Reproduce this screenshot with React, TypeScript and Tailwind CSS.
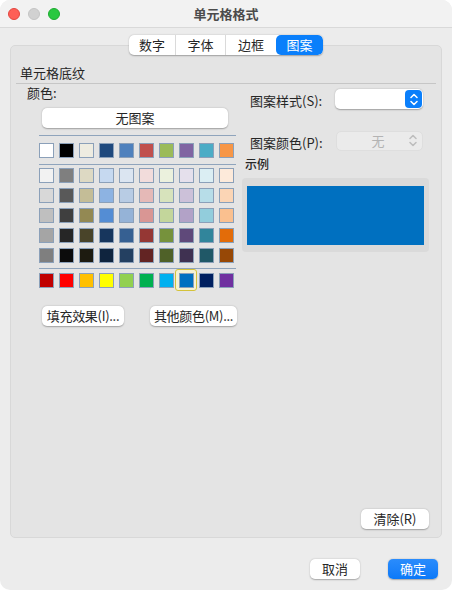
import React from 'react';

const FIRST_ROW = ['#FFFFFF', '#000000', '#EEECE1', '#1F497D', '#4F81BD', '#C0504D', '#9BBB59', '#8064A2', '#4BACC6', '#F79646'];

const THEME_ROWS = [
  ['#F2F2F2', '#7F7F7F', '#DDD9C3', '#C6D9F0', '#DBE5F1', '#F2DCDB', '#EBF1DD', '#E5E0EC', '#DBEEF3', '#FDEADA'],
  ['#D8D8D8', '#595959', '#C4BD97', '#8DB3E2', '#B8CCE4', '#E5B9B7', '#D7E3BC', '#CCC1D9', '#B7DDE8', '#FBD5B5'],
  ['#BFBFBF', '#3F3F3F', '#938953', '#548DD4', '#95B3D7', '#D99694', '#C3D69B', '#B2A2C7', '#92CDDC', '#FAC08F'],
  ['#A5A5A5', '#262626', '#494429', '#17365D', '#366092', '#953734', '#76923C', '#5F497A', '#31859B', '#E36C09'],
  ['#7F7F7F', '#0C0C0C', '#1D1B10', '#0F243E', '#244061', '#632423', '#4F6128', '#3F3151', '#205867', '#974806'],
];

const STANDARD_ROW = ['#C00000', '#FF0000', '#FFC000', '#FFFF00', '#92D050', '#00B050', '#00B0F0', '#0070C0', '#002060', '#7030A0'];

const TABS = ['数字', '字体', '边框', '图案'];

function Swatch({ color, selected }: { color: string; selected?: boolean }) {
  return (
    <div className="relative w-[15px] h-[15px] shrink-0">
      {selected && (
        <span className="absolute -left-[4px] -top-[4px] w-[22px] h-[22px] rounded-[3px] border border-[#d4c23a] bg-[#f5f1d3]" />
      )}
      <div className="relative w-[15px] h-[15px] border border-[#8ba0b9]" style={{ backgroundColor: color }} />
    </div>
  );
}

function SwatchRow({ colors, selectedIndex }: { colors: string[]; selectedIndex?: number }) {
  return (
    <div className="flex gap-[5px]">
      {colors.map((c, i) => (
        <Swatch key={i} color={c} selected={i === selectedIndex} />
      ))}
    </div>
  );
}

function Button({ children, className = '' }: { children: React.ReactNode; className?: string }) {
  return (
    <div
      className={
        'h-[20px] shrink-0 flex items-center justify-center whitespace-nowrap rounded-[5px] bg-white text-[13px] text-[#262626] shadow-[0_0.5px_1.5px_rgba(0,0,0,0.3)] ' +
        className
      }
    >
      {children}
    </div>
  );
}

function Chevrons({ color }: { color: string }) {
  return (
    <svg width="8" height="13" viewBox="0 0 8 13" fill="none" stroke={color} strokeWidth="1.5" strokeLinecap="round" strokeLinejoin="round">
      <path d="M1 4.5 L4 1.5 L7 4.5" />
      <path d="M1 8.5 L4 11.5 L7 8.5" />
    </svg>
  );
}

export default function App() {
  return (
    <div className="w-[452px] h-[590px] bg-white font-['Noto_Sans_CJK_SC',sans-serif]">
      <div className="w-full h-full rounded-[10px] overflow-hidden bg-[#ececec] flex flex-col">
        {/* title bar */}
        <div className="h-[28px] shrink-0 relative flex items-center justify-center bg-[#f2f2f2] border-b border-[#d9d9d9]">
          <div className="absolute left-[8px] top-[8px] flex gap-[8px]">
            <div className="w-[12px] h-[12px] rounded-full bg-[#fe5f57] border border-[#e2463f]" />
            <div className="w-[12px] h-[12px] rounded-full bg-[#d1d1d1] border border-[#c4c4c4]" />
            <div className="w-[12px] h-[12px] rounded-full bg-[#28c840] border border-[#1eab31]" />
          </div>
          <span className="text-[13px] font-bold text-[#4b4b4b]">单元格格式</span>
        </div>

        {/* tabs */}
        <div className="relative z-10 mt-[7px] flex justify-center">
          <div className="flex h-[20px] rounded-[5px] bg-white shadow-[0_0.5px_1.5px_rgba(0,0,0,0.3)] overflow-hidden">
            {TABS.map((t, i) => (
              <div
                key={t}
                className={
                  'flex items-center justify-center text-[13px] ' +
                  (i === 0 || i === 3 ? 'w-[47px] ' : 'w-[50px] ') +
                  (i === 3
                    ? 'bg-[#0a7ffb] text-white rounded-[5px]'
                    : 'text-[#262626] ' + (i < 2 ? 'border-r border-[#dadada]' : ''))
                }
              >
                {t}
              </div>
            ))}
          </div>
        </div>

        {/* group panel */}
        <div className="mt-[-10px] mx-[10px] h-[493px] rounded-[5px] bg-[#e4e4e4] border border-[#d8d8d8] flex flex-col">
          <div className="mt-[18px] pl-[9px] text-[13px] leading-[18px] text-[#262626]">单元格底纹</div>
          <div className="mx-[5px] h-px bg-[#c6c6c6] mt-px" />

          <div className="flex">
            {/* left column: colours */}
            <div className="w-[226px] shrink-0 pl-[16px] flex flex-col">
              <div className="text-[13px] leading-[18px] text-[#262626]">颜色:</div>
              <Button className="mt-[6px] ml-[15px] w-[186px]">无图案</Button>
              <div className="ml-[12px] w-[197px] h-px bg-[#8fa4bc] mt-[7px]" />
              <div className="ml-[12px] mt-[7px]">
                <SwatchRow colors={FIRST_ROW} />
              </div>
              <div className="ml-[12px] w-[197px] h-px bg-[#8fa4bc] mt-[6px]" />
              <div className="ml-[12px] mt-[3px] flex flex-col gap-[5px]">
                {THEME_ROWS.map((row, i) => (
                  <SwatchRow key={i} colors={row} />
                ))}
              </div>
              <div className="ml-[12px] w-[197px] h-px bg-[#8fa4bc] mt-[5px]" />
              <div className="ml-[12px] mt-[4px]">
                <SwatchRow colors={STANDARD_ROW} selectedIndex={7} />
              </div>
              <div className="mt-[18px] ml-[15px] flex gap-[26px]">
                <Button className="w-[82px] tracking-[-0.3px]">填充效果(I)...</Button>
                <Button className="w-[87px] tracking-[-0.3px]">其他颜色(M)...</Button>
              </div>
            </div>

            {/* right column: pattern */}
            <div className="ml-[5px] w-[187px] shrink-0 flex flex-col">
              <div className="mt-[4px] flex items-center justify-between pl-[8px] pr-[6px]">
                <span className="text-[13px] text-[#262626] mt-[3px]">图案样式(S):</span>
                <div className="w-[88px] h-[20px] rounded-[5px] bg-white shadow-[0_0.5px_1.5px_rgba(0,0,0,0.3)] flex justify-end items-center pr-[1px]">
                  <div className="w-[17px] h-[18px] rounded-[4px] bg-[#0a7ffb] flex items-center justify-center">
                    <Chevrons color="#ffffff" />
                  </div>
                </div>
              </div>
              <div className="mt-[19px] flex items-center justify-between pl-[8px] pr-[6px]">
                <span className="text-[13px] text-[#262626] mt-[3px]">图案颜色(P):</span>
                <div className="w-[87px] h-[20px] rounded-[5px] bg-[#ebebeb] border border-[#dedede] flex items-center pr-[5px]">
                  <span className="flex-1 text-center text-[13px] text-[#b3b3b3] pl-[10px]">无</span>
                  <Chevrons color="#bdbdbd" />
                </div>
              </div>
              <div className="mt-[4px] pl-[3px] text-[12px] leading-[16px] font-medium text-[#262626]">示例</div>
              <div className="mt-[6px] h-[74px] rounded-[4px] bg-[#dadada] pt-[8px] px-[5px]">
                <div className="h-[59px] bg-[#0070c0]" />
              </div>
            </div>
          </div>

          <div className="mt-auto mb-[8px] flex justify-end pr-[12px]">
            <Button className="w-[68px]">清除(R)</Button>
          </div>
        </div>

        {/* dialog buttons */}
        <div className="mt-[21px] flex justify-end gap-[28px] pr-[14px]">
          <Button className="w-[50px]">取消</Button>
          <div className="w-[50px] h-[20px] flex items-center justify-center rounded-[5px] bg-gradient-to-b from-[#2a8cfc] to-[#0a79f8] text-[13px] text-white shadow-[0_0.5px_1.5px_rgba(0,0,0,0.3)]">
            确定
          </div>
        </div>
      </div>
    </div>
  );
}
